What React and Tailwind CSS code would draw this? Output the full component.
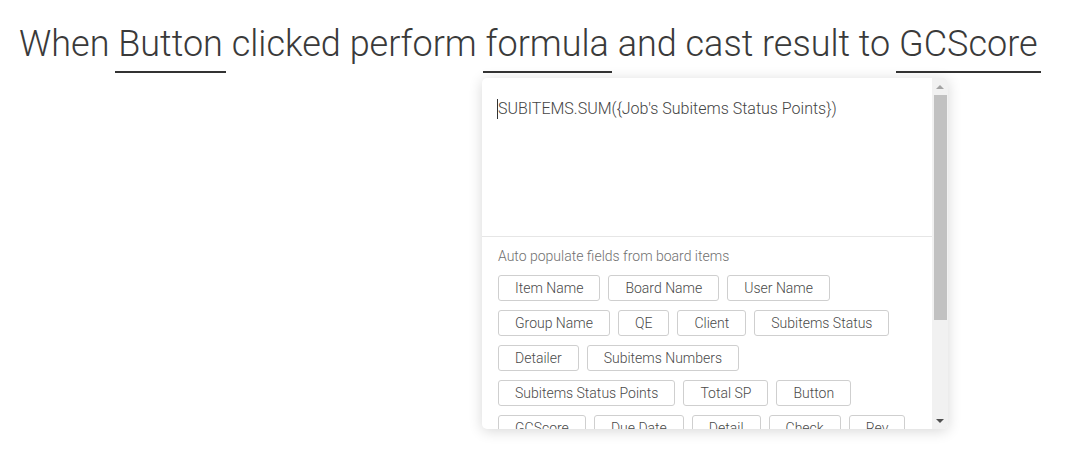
import React from 'react';

const rows = [
  ['Item Name', 'Board Name', 'User Name'],
  ['Group Name', 'QE', 'Client', 'Subitems Status'],
  ['Detailer', 'Subitems Numbers'],
  ['Subitems Status Points', 'Total SP', 'Button'],
  ['GCScore', 'Due Date', 'Detail', 'Check', 'Rev'],
];

function Pick({ children }) {
  return (
    <span className="inline-block mx-[-3px] px-[3px] pb-[6px] border-b-2 border-[#333]">
      {children}
    </span>
  );
}

export default function App() {
  return (
    <div className="min-h-[452px] bg-white pl-[19px] pt-[23px] font-['Roboto',sans-serif]">
      <h1 className="text-[36px] leading-[42px] font-light text-[#3a3a3a] whitespace-nowrap">
        When <Pick>Button</Pick> clicked perform <Pick>formula</Pick> and cast result to <Pick>GCScore</Pick>
      </h1>

      <div className="ml-[463px] mt-[5px] w-[466px] h-[351px] flex rounded-[5px] overflow-hidden bg-white shadow-[0_2px_14px_rgba(0,0,0,0.16)]">
        <div className="flex-1 overflow-hidden">
          <div className="h-[159px] border-b border-[#e6e6e6] px-4 pt-[21px]">
            <div className="text-[16px] leading-5 font-light text-[#444] border-l border-[#333] -ml-px">
              SUBITEMS.SUM({'{'}Job's Subitems Status Points{'}'})
            </div>
          </div>
          <div className="px-4 pt-[9px]">
            <div className="text-[14px] leading-[20px] font-light text-[#707070]">Auto populate fields from board items</div>
            <div className="mt-[9px] flex flex-col gap-[9px]">
              {rows.map((row, i) => (
                <div key={i} className="flex gap-2">
                  {row.map(label => (
                    <button
                      key={label}
                      className="h-[26px] px-4 border border-[#cfcfcf] rounded-[3px] text-[14px] leading-6 font-light text-[#4a4a4a] bg-white whitespace-nowrap"
                    >
                      {label}
                    </button>
                  ))}
                </div>
              ))}
            </div>
          </div>
        </div>

        <div className="w-[16px] bg-[#f1f1f1] flex flex-col items-center">
          <div className="h-[17px] flex items-center justify-center">
            <div className="w-0 h-0 border-x-[4px] border-x-transparent border-b-[4px] border-b-[#a3a3a3]" />
          </div>
          <div className="w-[13px] h-[225px] bg-[#c1c1c1]" />
          <div className="flex-1" />
          <div className="h-[17px] flex items-center justify-center">
            <div className="w-0 h-0 border-x-[4px] border-x-transparent border-t-[4px] border-t-[#505050]" />
          </div>
        </div>
      </div>
    </div>
  );
}
